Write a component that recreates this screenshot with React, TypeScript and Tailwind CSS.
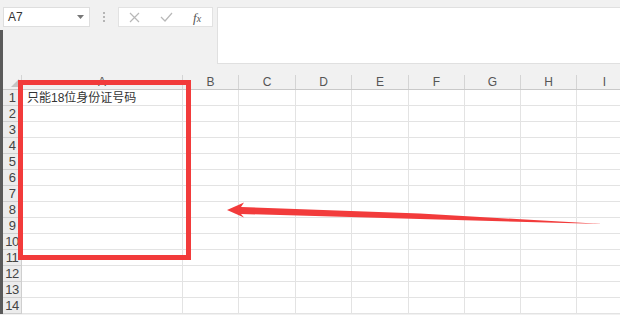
import React from "react";

const cols = [
  { label: "B", w: "w-[56px]" },
  { label: "C", w: "w-[57px]" },
  { label: "D", w: "w-[56px]" },
  { label: "E", w: "w-[57px]" },
  { label: "F", w: "w-[56px]" },
  { label: "G", w: "w-[56px]" },
  { label: "H", w: "w-[56px]" },
  { label: "I", w: "w-[56px]" },
];

const rows = Array.from({ length: 14 }, (_, i) => i + 1);

const FormulaBar = () => (
  <div className="flex items-start h-[64px] pt-[7px] pl-[3px]">
    {/* 名称框 */}
    <div className="w-[87px] h-[20px] bg-white border border-[#dedede] flex items-center justify-between px-[4px]">
      <span className="text-[12px] text-[#333]">A7</span>
      <svg width="7" height="4" viewBox="0 0 7 4" className="mr-[1px]">
        <path d="M0 0 L7 0 L3.5 4 Z" fill="#777" />
      </svg>
    </div>
    <div className="w-[28px] h-[20px] flex flex-col items-center justify-center gap-[2px]">
      <span className="w-[2px] h-[2px] bg-[#b5b5b5]" />
      <span className="w-[2px] h-[2px] bg-[#b5b5b5]" />
      <span className="w-[2px] h-[2px] bg-[#b5b5b5]" />
    </div>
    {/* 取消 / 确认 / fx */}
    <div className="w-[95px] h-[20px] bg-white border border-[#e2e2e2] flex items-center">
      <div className="w-[32px] flex justify-center">
        <svg width="11" height="11" viewBox="0 0 11 11">
          <path d="M1 1 L10 10 M10 1 L1 10" stroke="#b8b8b8" strokeWidth="1.2" />
        </svg>
      </div>
      <div className="w-[32px] flex justify-center">
        <svg width="13" height="10" viewBox="0 0 13 10">
          <path d="M1 5 L5 9 L12 1" stroke="#b8b8b8" strokeWidth="1.2" fill="none" />
        </svg>
      </div>
      <div className="w-[30px] flex justify-center">
        <span className="text-[13px] italic text-[#555] leading-none [font-family:'Liberation_Serif',serif]">
          f<span className="text-[10px]">x</span>
        </span>
      </div>
    </div>
    <div className="ml-[4px] flex-1 h-[57px] bg-white border border-[#e0e0e0] border-r-0" />
  </div>
);

const Sheet = () => (
  <div className="flex flex-col">
    {/* 列标题 */}
    <div className="flex h-[15px] mt-[11px] border-b border-[#c9c9c9]">
      <div className="w-[19px] shrink-0 flex items-end justify-end pr-[2px] pb-[2px] border-r border-[#d4d4d4]">
        <svg width="8" height="8" viewBox="0 0 8 8">
          <path d="M8 0 L8 8 L0 8 Z" fill="#c4c4c4" />
        </svg>
      </div>
      <div className="w-[161px] shrink-0 text-center text-[12px] leading-[15px] text-[#555] border-r border-[#d4d4d4]">
        A
      </div>
      {cols.map((c) => (
        <div
          key={c.label}
          className={`${c.w} shrink-0 text-center text-[12px] leading-[15px] text-[#555] border-r border-[#d4d4d4]`}
        >
          {c.label}
        </div>
      ))}
    </div>
    {rows.map((r) => (
      <div key={r} className="flex h-[16px]">
        <div className="w-[19px] shrink-0 bg-[#ececec] border-r border-b border-[#cfcfcf] text-[13px] leading-[16px] text-[#444] flex justify-center tracking-[-0.5px]">
          {r}
        </div>
        <div className="w-[161px] shrink-0 bg-white border-r border-b border-[#e3e3e3] text-[12px] leading-[16px] text-[#333] pl-[5px] whitespace-nowrap">
          {r === 1 ? "只能18位身份证号码" : ""}
        </div>
        {cols.map((c) => (
          <div key={c.label} className={`${c.w} shrink-0 bg-white border-r border-b border-[#e3e3e3]`} />
        ))}
      </div>
    ))}
  </div>
);

export default function App() {
  return (
    <div className="relative w-[620px] h-[315px] overflow-hidden bg-[#f1f1f1] [font-family:'Liberation_Sans','Noto_Sans_CJK_SC',sans-serif]">
      <FormulaBar />
      <div className="flex">
        <div className="w-[3px] shrink-0 bg-[#5a5a5a]" />
        <Sheet />
      </div>
      <div className="absolute left-0 top-[30px] w-[3px] h-[34px] bg-[#5a5a5a]" />

      {/* 红色标注框 */}
      <div className="absolute left-[18px] top-[80px] w-[173px] h-[180px] border-[5px] border-[#f23b3b]" />

      {/* 红色箭头 */}
      <svg className="absolute left-0 top-0" width="620" height="315" viewBox="0 0 620 315">
        <path
          d="M227 210 L244 202.5 L241 207 L420 213.5 L603 224 L420 219 L241 214 L244 217.5 Z"
          fill="#f23b3b"
        />
      </svg>
    </div>
  );
}
